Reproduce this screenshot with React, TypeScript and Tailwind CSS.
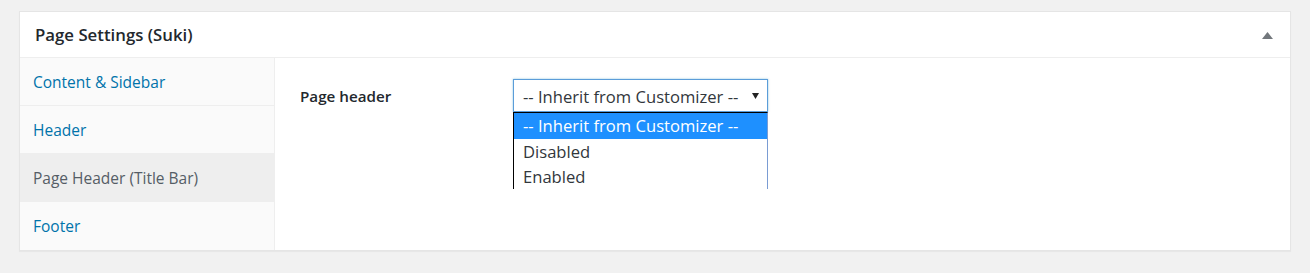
import { useState } from 'react'

const tabs = ['Content & Sidebar', 'Header', 'Page Header (Title Bar)', 'Footer']
const options = ['-- Inherit from Customizer --', 'Disabled', 'Enabled']

export default function App() {
  const [active, setActive] = useState(2)
  const [value] = useState(0)

  return (
    <div className="h-[273px] bg-[#f1f1f1] px-[19px] pt-[11px] font-['Open_Sans',sans-serif] text-[15.5px]">
      <div className="border border-[#e5e5e5] bg-white shadow-[0_1px_1px_rgba(0,0,0,0.04)]">
        {/* Box title */}
        <div className="flex h-[46px] items-center justify-between border-b border-[#eee] pl-[15px] pr-[17px]">
          <h2 className="text-[16.8px] font-semibold text-[#23282d]">Page Settings (Suki)</h2>
          <svg width="11" height="7" viewBox="0 0 11 7" className="mt-[1px]">
            <path d="M5.5 0 L11 7 L0 7 Z" fill="#72777c" />
          </svg>
        </div>

        <div className="flex">
          {/* Tabs */}
          <ul className="w-[255px] shrink-0 border-r border-[#eee] bg-[#fafafa]">
            {tabs.map((tab, i) => (
              <li
                key={tab}
                onClick={() => setActive(i)}
                className={`flex h-[48px] cursor-pointer items-center pl-[13px] pt-[2px] ${
                  i < tabs.length - 1 ? 'border-b border-[#eee]' : ''
                } ${i === active ? 'bg-[#eee] text-[#555d66]' : 'text-[#0073aa]'}`}
              >
                {tab}
              </li>
            ))}
          </ul>

          {/* Fields */}
          <div className="flex-1 pl-[25px] pt-[21px]">
            <div className="flex items-center">
              <label className="w-[213px] pt-[2px] text-[15.2px] font-semibold text-[#23282d]">Page header</label>
              <div className="relative">
                <div className="flex h-[33px] w-[255px] items-center justify-between border border-[#5b9dd9] pl-[9px] pr-[8px] text-[16.6px] text-[#32373c] shadow-[0_0_2px_rgba(30,140,190,0.5)]">
                  <span className="pt-[3px]">{options[value]}</span>
                  <svg width="7" height="6" viewBox="0 0 7 6">
                    <path d="M0 0 L7 0 L3.5 6 Z" fill="#222" />
                  </svg>
                </div>
                <ul className="absolute left-0 top-full z-10 w-[255px] border-l border-t border-r border-l-black border-t-black border-r-[#7a9cd3] bg-white text-[16.6px] text-[#32373c]">
                  {options.map((opt, i) => (
                    <li
                      key={opt}
                      className={`flex items-center pl-[9px] pt-[1px] ${i === 0 ? 'h-[26px]' : 'h-[25px]'} ${
                        i === value ? 'bg-[#1e90ff] text-white' : ''
                      }`}
                    >
                      {opt}
                    </li>
                  ))}
                </ul>
              </div>
            </div>
          </div>
        </div>
      </div>
    </div>
  )
}
